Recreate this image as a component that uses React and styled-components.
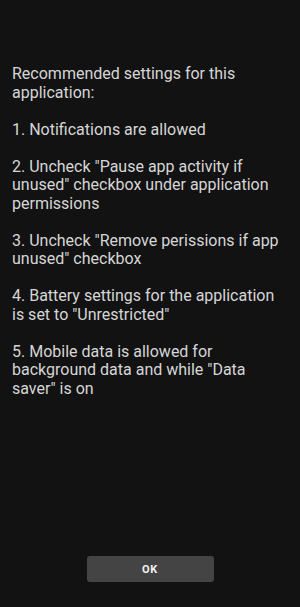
import React from 'react';
import styled, { createGlobalStyle } from 'styled-components';

const GlobalStyle = createGlobalStyle`
    html, body {
        margin: 0;
        padding: 0;
        background: #121212;
    }
`;

const items = [
    'Recommended settings for this application:',
    '1. Notifications are allowed',
    '2. Uncheck "Pause app activity if unused" checkbox under application permissions',
    '3. Uncheck "Remove perissions if app unused" checkbox',
    '4. Battery settings for the application is set to "Unrestricted"',
    '5. Mobile data is allowed for background data and while "Data saver" is on',
];

function App() {
    return (
        <Screen>
            <GlobalStyle />
            <Content>
                {items.map((text) => (
                    <Paragraph key={text}>{text}</Paragraph>
                ))}
            </Content>
            <Footer>
                <OkButton>OK</OkButton>
            </Footer>
        </Screen>
    );
}

const Screen = styled.div`
    width: 300px;
    height: 607px;
    background: #121212;
    display: flex;
    flex-direction: column;
    font-family: Roboto, "Liberation Sans", sans-serif;
`;

const Content = styled.div`
    flex: 1;
    padding: 65px 12px 0 12px;
    display: flex;
    flex-direction: column;
    gap: 18.5px;
`;

const Paragraph = styled.p`
    margin: 0;
    color: #d6d6d6;
    font-size: 16px;
    line-height: 18.5px;
`;

const Footer = styled.div`
    display: flex;
    justify-content: center;
    padding-bottom: 25px;
`;

const OkButton = styled.button`
    width: 127px;
    height: 26px;
    border: none;
    border-radius: 3px;
    background: #444444;
    color: #f2f2f2;
    font-family: Roboto, "Liberation Sans", sans-serif;
    font-weight: 700;
    font-size: 11px;
    letter-spacing: 0.8px;
    padding: 0;
`;

export default App;
